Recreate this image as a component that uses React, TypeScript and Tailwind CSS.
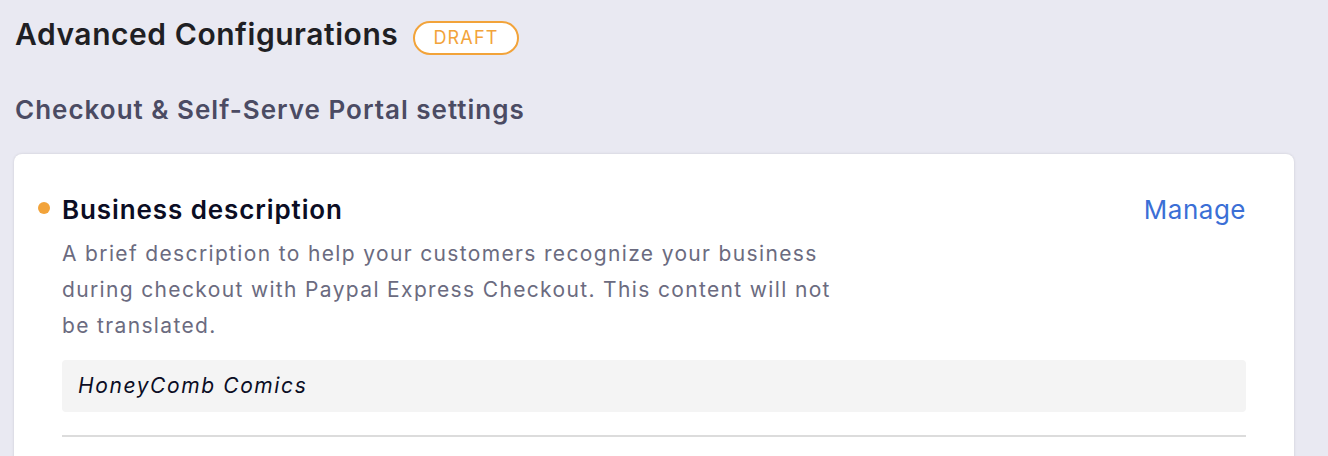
import React from "react";

export default function App() {
  return (
    <div
      className="h-[456px] w-[1328px] overflow-hidden bg-[#e9e9f2] px-[14px] pt-[14px]"
      style={{ fontFamily: "Inter, 'Noto Sans', sans-serif" }}
    >
      <div className="flex items-start gap-[15px] pl-[1px]">
        <h1 className="text-[30px] font-semibold leading-[40px] tracking-[0.55px] text-[#1f1f24]">
          Advanced Configurations
        </h1>
        <span className="mt-[7px] flex h-[34px] items-center rounded-full border-2 border-[#f2a33a] bg-white px-[18px] text-[18px] leading-none tracking-[1.2px] text-[#f2a33a]">
          DRAFT
        </span>
      </div>
      <h2 className="mt-[39px] pl-[1px] text-[26px] font-semibold leading-[32px] tracking-[1px] text-[#4b4b63]">
        Checkout &amp; Self-Serve Portal settings
      </h2>
      <div className="mt-[28px] h-[400px] w-[1280px] rounded-[8px] bg-white pl-[24px] pr-[48px] pt-[38px] shadow-[0_0_3px_rgba(0,0,0,0.12)]">
        <div className="flex items-start">
          <span className="mt-[10px] h-[12px] w-[12px] shrink-0 rounded-full bg-[#f2a33a]" />
          <div className="ml-[12px] flex-1">
            <div className="flex items-center justify-between">
              <h3 className="text-[26px] font-semibold leading-[36px] tracking-[0.9px] text-[#0b0d24]">
                Business description
              </h3>
              <a className="text-[26px] leading-[36px] tracking-[0.5px] text-[#3b6fd6]">Manage</a>
            </div>
            <p className="mt-[8px] max-w-[800px] text-[21px] leading-[36px] tracking-[1.35px] text-[#6b6b80]">
              A brief description to help your customers recognize your business
              during checkout with Paypal Express Checkout. This content will not
              be translated.
            </p>
            <div className="mt-[16px] flex h-[52px] items-center rounded-[4px] bg-[#f4f4f4] px-[16px] text-[21px] italic tracking-[1.6px] text-[#0b0d24]">
              HoneyComb Comics
            </div>
            <div className="mt-[23px] h-[2px] bg-[#dcdcdc]" />
          </div>
        </div>
      </div>
    </div>
  );
}
